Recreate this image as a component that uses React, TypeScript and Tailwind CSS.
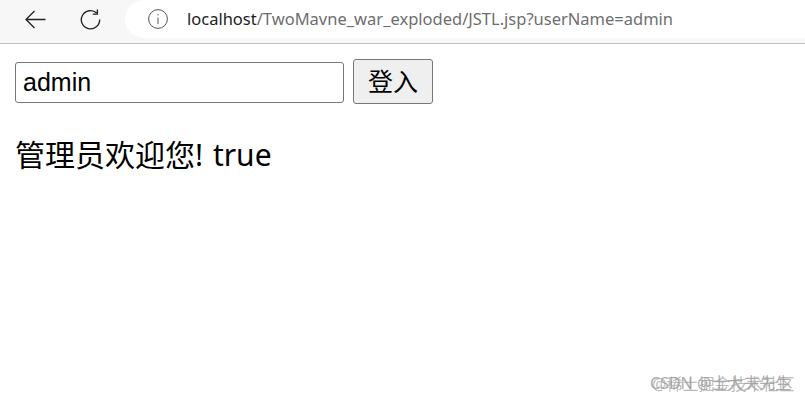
import React from "react";

const cjk = "font-['Noto_Sans','Noto_Sans_CJK_SC',sans-serif]";

const App: React.FC = () => {
  return (
    <div className={`relative h-[400px] w-[805px] overflow-hidden bg-white text-black ${cjk}`}>
      <div className="flex h-[44px] items-start border-b border-[#bfbfbf] bg-[#f7f7f7]">
        <div className="flex h-[38px] w-[125px] items-center">
          <svg className="ml-[25px]" width="21" height="19" viewBox="0 0 21 19" fill="none" stroke="#222" strokeWidth="1.3">
            <path d="M1 9.5H20.5M9.5 1L1 9.5L9.5 18" />
          </svg>
          <svg className="ml-[34px]" width="21" height="21" viewBox="0 0 22 22" fill="none" stroke="#222" strokeWidth="1.4">
            <path d="M17.5 4.2A9.6 9.6 0 1 0 20.6 11" />
            <path d="M18.2 0.5V5.3H13.4" />
          </svg>
        </div>
        <div className="flex h-[38px] flex-1 items-center rounded-l-[19px] bg-white">
          <svg className="ml-[23px]" width="20" height="20" viewBox="0 0 20 20" fill="none" stroke="#555" strokeWidth="1">
            <circle cx="10" cy="10" r="9.4" />
            <path d="M10 8.5V15M10 5V6.4" />
          </svg>
          <div className="ml-[19px] text-[16.5px] text-[#6e6e6e]">
            <span className="text-[#222]">localhost</span>/TwoMavne_war_exploded/JSTL.jsp?userName=admin
          </div>
        </div>
      </div>

      <div className="flex items-start pl-[15px] pt-[15px]">
        <input
          type="text"
          defaultValue="admin"
          className="mt-[3px] h-[41px] w-[329px] rounded-[3px] border border-[#767676] px-[7px] font-['Liberation_Sans',sans-serif] text-[25px] outline-none"
        />
        <button className="ml-[9px] h-[45px] w-[80px] rounded-[3px] border border-[#767676] bg-[#efefef] text-[25px]">
          登入
        </button>
      </div>

      <p className="ml-[15px] mt-[27px] text-[30px] leading-[48px]">
        管理员欢迎您! <span className="ml-[2px]">true</span>
      </p>

      <div className="absolute left-[650px] top-[372px] text-[16px] leading-[22px] text-[#8a8a8a] opacity-70">CSDN @士大夫先生</div>
      <div className="absolute left-[652px] top-[373px] text-[16px] leading-[22px] text-[#a0a0a0] opacity-70">@稀土掘金技术社区</div>
    </div>
  );
};

export default App;
